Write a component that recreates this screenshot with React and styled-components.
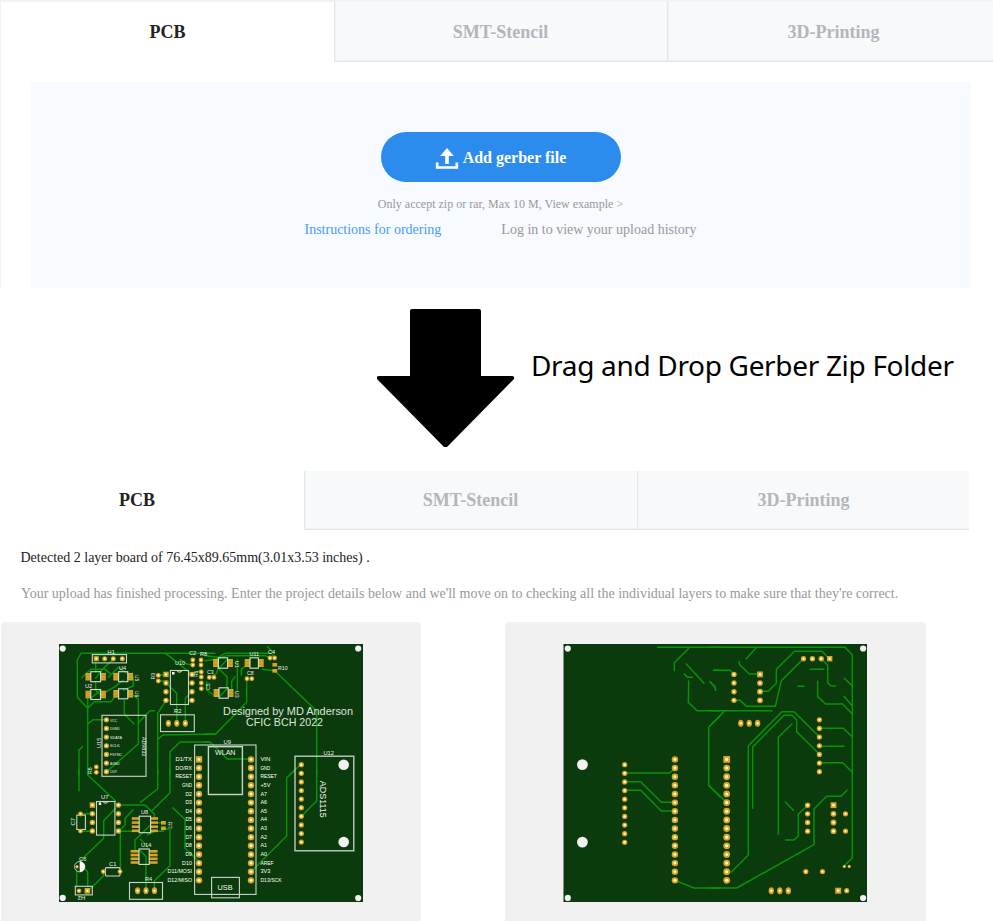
import React from "react";
import styled, { createGlobalStyle, css } from "styled-components";

const GlobalStyle = createGlobalStyle`
  * { box-sizing: border-box; }
  body {
    margin: 0;
    background: #fff;
    font-family: "Liberation Serif", "Times New Roman", serif;
    overflow: hidden;
  }
`;

const Page = styled.main`
  width: 993px;
  height: 921px;
  overflow: hidden;
  display: flex;
  flex-direction: column;
`;

const UploadSection = styled.section`
  height: 288px;
  flex: none;
  border-top: 2px solid #f1f2f6;
  border-left: 1px solid #f1f2f6;
  overflow: hidden;
`;

const TabBar = styled.nav`
  display: grid;
  grid-template-columns: ${(p) => p.$columns};
  height: ${(p) => p.$height}px;
`;

const Tab = styled.div`
  display: flex;
  align-items: center;
  justify-content: center;
  padding-right: ${(p) => p.$inset || 0}px;
  padding-top: ${(p) => p.$drop || 0}px;
  padding-bottom: ${(p) => p.$lift || 0}px;
  font-size: 18px;
  line-height: 20px;
  font-weight: 700;
  color: #222;
  ${(p) =>
    p.$muted &&
    css`
      color: #b3b6bb;
      background: #f8f9fb;
      border-left: 1px solid #e2e7ea;
      border-bottom: 1px solid #e2e5e8;
      box-shadow: inset 1px -1px 1px #f0f3f5;
    `}
`;

const DropZone = styled.div`
  width: 940px;
  height: 206px;
  margin: 20px 0 0 30px;
  padding-top: 50px;
  background: #f7faff;
  display: flex;
  flex-direction: column;
  align-items: center;
`;

const UploadButton = styled.button`
  width: 240px;
  height: 50px;
  border: 0;
  border-radius: 25px;
  background: #2c8cee;
  color: #fff;
  font: 700 16px/20px "Liberation Serif", serif;
  display: flex;
  align-items: center;
  justify-content: center;
  gap: 4px;
  padding: 2px 1px 0 0;

  svg {
    margin-top: 2px;
  }
`;

const Hint = styled.p`
  margin: 14px 1px 0 0;
  font-size: 12px;
  line-height: 16px;
  color: #999;
`;

const Links = styled.div`
  display: flex;
  gap: 60px;
  margin: 9px 1px 0 0;
  font-size: 14px;
  line-height: 18px;
`;

const TextLink = styled.a`
  color: ${(p) => (p.$accent ? "#4a9bff" : "#999")};
`;

const StepBanner = styled.section`
  height: 183px;
  flex: none;
  display: flex;
  align-items: flex-start;
  padding: 21px 0 0 377px;
  gap: 16px;
`;

const StepText = styled.h2`
  margin: 37px 0 0;
  font: 400 28px/38px "Noto Sans", "Open Sans", sans-serif;
  letter-spacing: -0.32px;
  color: #000;
  white-space: nowrap;
`;

const ResultSection = styled.section`
  width: 969px;
`;

const Message = styled.p`
  margin: ${(p) => (p.$first ? 19 : 18)}px 0 0 ${(p) => (p.$first ? 20.5 : 21)}px;
  font-size: 14px;
  line-height: 18px;
  color: ${(p) => (p.$first ? "#222" : "#999")};
`;

const Previews = styled.div`
  display: flex;
  gap: 84px;
  margin: 19px 0 0 1px;
`;

const PreviewCard = styled.figure`
  margin: 0;
  width: ${(p) => p.$width}px;
  height: 330px;
  border-radius: 4px;
  background: #f1f1f1;
  padding: 22px 0 0 58px;
`;

const BoardSvg = styled.svg`
  display: block;
  font-family: "Liberation Sans", Arial, sans-serif;
`;

const Traces = ({ x, y, lines }) => (
  <g
    transform={`translate(${x} ${y}) scale(0.33333)`}
    fill="none"
    stroke="#079309"
    strokeWidth="4.4"
    strokeLinejoin="round"
    strokeLinecap="round"
  >
    {lines.map((l) => (
      <polyline key={l} points={l} />
    ))}
  </g>
);

const Dot = ({ x, y, square, r = 3.2, tall = 0 }) => (
  <g>
    {square ? (
      <rect x={x - r} y={y - r} width={r * 2} height={r * 2} fill="#d9a520" />
    ) : (
      <ellipse cx={x} cy={y} rx={r} ry={r + tall} fill="#d9a520" />
    )}
    <circle cx={x} cy={y} r={r * 0.46} fill="#fff6da" />
  </g>
);

const DotColumn = ({ x, y, count, step, square, r }) =>
  Array.from({ length: count }, (_, i) => (
    <Dot key={i} x={x} y={y + i * step} r={r} square={square && i === 0} />
  ));

const Chip = ({ x, y, w, h, pw = 5.3, bars = 1 }) => (
  <g>
    {[x - pw, x + w].map((px) =>
      Array.from({ length: bars }, (_, i) => {
        const barHeight = bars === 1 ? h - 2.4 : 2.6;
        const barY = bars === 1 ? y + 1.2 : y + 1 + (i * (h - 4.2)) / (bars - 1);
        return <rect key={`${px}-${i}`} x={px} y={barY} width={pw} height={barHeight} fill="#d7a321" />;
      })
    )}
    {bars === 1 && (
      <path
        d={`M${x - pw} ${y + 3.6}h${pw}M${x - pw} ${y + 6.6}h${pw}M${x + w} ${y + 3.6}h${pw}M${x + w} ${y + 6.6}h${pw}`}
        stroke="#a98a1e"
        strokeWidth=".5"
      />
    )}
    <rect x={x} y={y} width={w} height={h} fill="none" stroke="#d5ded5" strokeWidth="1.1" />
  </g>
);

const Silk = ({ x, y, size = 6, w, end, turn, children, fill = "#eef3ee" }) => (
  <text
    x={x}
    y={y}
    fontSize={size}
    textLength={w}
    lengthAdjust="spacingAndGlyphs"
    textAnchor={end ? "end" : "start"}
    fill={fill}
    transform={turn ? `rotate(${turn} ${x} ${y})` : undefined}
  >
    {children}
  </text>
);

const LEFT_PINS = ["D1/TX", "DO/RX", "RESET", "GND", "D2", "D3", "D4", "D5", "D6", "D7", "D8", "D9", "D10", "D11/MOSI", "D12/MISO"];
const RIGHT_PINS = ["VIN", "GND", "RESET", "+5V", "A7", "A6", "A5", "A4", "A3", "A2", "A1", "A0", "AREF", "3V3", "D13/SCK"];
const SENSOR_PINS = ["VCC", "DGND", "SDATA", "SCLK", "FSYNC", "AGND", "OUT"];
const pinWidth = (s) => (s.length > 6 ? s.length * 3.05 : s.length * 3.3);

const TOP_LEFT = [
  "480,40 78,40 67,60 67,172 98,205 98,405",
  "98,170 98,205 118,185 168,185 178,172",
  "80,113 107,88 150,88 165,100",
  "122,68 122,95",
  "175,58 145,85 122,115",
  "160,112 190,82 235,112 235,138 205,150",
  "122,125 122,150 137,165 180,140 205,120",
  "107,175 137,150",
  "330,40 345,50 411,103",
  "208,180 208,222 237,252",
  "235,165 250,178 250,312 155,395",
  "250,248 285,212 298,212",
  "155,239 115,239 100,250",
  "333,181 308,220 308,405",
  "365,250 365,160 345,140 333,130",
  "391,250 391,175 411,155",
  "308,298 323,285 480,282",
  "345,405 345,335 375,306 465,306",
  "72,405 72,330 83,320",
  "310,123 340,123",
  "310,106 333,104",
  "375,58 395,72 413,75",
  "411,103 440,90",
];
const TOP_RIGHT = [
  "0,47 40,52 60,40 200,40 209,55",
  "0,62 30,58 65,47 180,47 195,54",
  "0,282 32,282 125,187 125,116",
  "0,306 15,306 67,357 137,357",
  "172,88 209,92 335,213 335,405",
  "288,373 253,405",
  "187,20 205,37",
  "97,60 97,150",
  "40,85 66,110 66,143",
  "80,148 80,124 90,110",
  "109,105 109,88 122,78",
  "42,85 68,57",
  "43,170 68,145",
  "15,112 35,100 40,80",
  "5,125 5,150 30,168",
];
const BOTTOM_LEFT = [
  "72,0 72,62",
  "98,0 98,15 182,93",
  "308,0 308,57 256,97",
  "345,0 345,68 290,123",
  "190,105 270,105 298,133 298,145",
  "182,115 146,152 146,205 75,273",
  "190,184 238,184",
  "196,184 196,300",
  "234,120 210,145 210,165 192,182",
  "78,131 110,131",
  "78,184 112,184",
  "287,165 240,210 240,240",
  "273,362 273,260 255,240",
  "278,194 300,184 325,184",
  "308,158 325,158",
  "325,175 345,178 345,287 298,332 298,362",
  "65,300 65,350",
  "83,290 98,305 98,350",
  "108,355 145,318 145,305",
  "353,113 390,148 390,235 430,272",
  "256,208 278,230",
];
const BOTTOM_RIGHT = ["335,0 335,93 290,138", "268,2 245,23 245,198 140,303"];

const BACK_LEFT = [
  "293,22 480,22",
  "387,24 343,68 343,92",
  "379,72 432,130",
  "373,102 382,112 397,112",
  "386,123 385,187 411,212 480,212",
  "450,126 465,141 467,151",
  "461,91 480,91",
  "480,228 446,262 446,436 480,470",
  "195,399 328,399 345,385",
  "195,425 242,425 304,487 345,487",
  "195,451 242,451 304,513 345,513",
  "345,721 402,744 480,744",
];
const BACK_RIGHT = [
  "0,22 405,22 427,44 427,653 403,677",
  "138,24 108,57",
  "87,65 89,74 118,102 148,102",
  "10,91 60,91 72,103",
  "0,125 15,140 17,151",
  "150,154 175,154 199,130 199,88 254,34 336,34 358,56",
  "72,181 90,181 110,199 196,199 214,122 280,56",
  "0,212 186,212",
  "43,214 0,257",
  "0,440 50,487",
  "334,56 353,76 353,128 362,137 377,138",
  "301,88 341,88",
  "263,139 282,139",
  "323,124 323,170 347,192 398,192 427,222",
  "403,115 427,138",
  "402,169 427,198",
  "328,265 400,265 427,291",
  "328,319 402,319",
  "328,368 398,368 427,397",
  "50,695 65,695 115,645 115,317 216,215 252,215 328,290",
  "128,505 128,321 222,226 246,226 260,240 260,275 328,342",
  "246,252 205,292 205,583",
  "226,486 250,511",
  "227,600 252,600 265,588 265,522 292,497",
  "0,744 80,744 312,614 312,507 350,469 393,469 411,451",
];

const Holes = ({ left, right }) => (
  <g fill="#f1f1f1">
    <circle cx={left} cy="648.6" r="3.1" />
    <circle cx={right} cy="648.5" r="3.1" />
    <circle cx={left} cy="897.9" r="3.1" />
    <circle cx={right} cy="898" r="3.1" />
  </g>
);

const FrontBoard = () => (
  <BoardSvg width="304" height="258" viewBox="59 644 304 258">
    <rect x="59" y="644" width="304" height="258" fill="#0b3a0c" />
    <Traces x={55} y={640} lines={TOP_LEFT} />
    <Traces x={205} y={640} lines={TOP_RIGHT} />
    <Traces x={55} y={770} lines={BOTTOM_LEFT} />
    <Traces x={205} y={770} lines={BOTTOM_RIGHT} />
    <Holes left={62.7} right={358.2} />
    <g fill="none" stroke="#cbd6cb" strokeWidth="1.1">
      <rect x="92.3" y="654.6" width="34.2" height="8.3" />
      <rect x="170.4" y="670.5" width="18.1" height="34" />
      <path d="M177 670.5q2.5 3.4 5 0" />
      <rect x="160.5" y="714.8" width="33.8" height="16.8" />
      <rect x="102" y="715.3" width="44" height="61" />
      <rect x="194.6" y="745" width="61.4" height="149.4" />
      <rect x="208.4" y="746.7" width="34" height="47.8" strokeWidth="1.4" />
      <rect x="211.6" y="877.4" width="27.8" height="20.4" />
      <rect x="295" y="756.2" width="58.8" height="94.6" strokeWidth="1.3" />
      <rect x="96.5" y="801.5" width="18.4" height="33.6" />
      <path d="M103 801.5q2.5 3.4 5 0" />
      <rect x="76.8" y="815.1" width="8.6" height="14.4" />
      <rect x="105.4" y="867.6" width="14.6" height="8.4" rx="1" />
      <rect x="75.3" y="886.3" width="17" height="8.6" />
      <rect x="129.5" y="882.5" width="33" height="16.8" />
    </g>
    <rect x="172" y="672" width="2.5" height="2.5" fill="#fff" />
    <rect x="98.8" y="802.5" width="2.4" height="2.4" fill="#fff" />
    <circle cx="343.7" cy="764.7" r="5.3" fill="#f1f1f1" />
    <circle cx="343.7" cy="842" r="5.3" fill="#f1f1f1" />

    <Chip x={90.8} y={671.7} w={9.8} h={10} />
    <Chip x={90.8} y={689.5} w={9.8} h={10} />
    <Chip x={118.6} y={671.7} w={9.2} h={10} />
    <Chip x={118.6} y={688.8} w={9.2} h={10} />
    <Chip x={218.4} y={657.8} w={9.2} h={10.4} />
    <Chip x={219} y={687.8} w={9.2} h={10.4} />
    <Chip x={250} y={657.8} w={8.4} h={10.4} />
    <Chip x={139.2} y={816.2} w={11.4} h={16.5} pw={7.4} bars={4} />
    <Chip x={139} y={849} w={10.2} h={15.4} pw={8.4} bars={4} />

    {[96.3, 104.7, 113.3, 122.3].map((x, i) => (
      <Dot key={x} x={x} y={658.7} r={2.5} square={i === 0} />
    ))}
    <DotColumn x={166} y={674.4} count={4} step={8.65} r={2.7} square />
    <DotColumn x={192} y={674.4} count={4} step={8.65} r={2.7} />
    <DotColumn x={92.4} y={805.1} count={4} step={8.65} r={2.7} square />
    <DotColumn x={118.4} y={805.1} count={4} step={8.65} r={2.7} />
    <DotColumn x={106.4} y={719.8} count={7} step={8.65} r={2.6} />
    <DotColumn x={199} y={759.4} count={15} step={8.64} r={3.2} square />
    <DotColumn x={251} y={759.4} count={15} step={8.64} r={3.2} />
    <DotColumn x={301.3} y={764.7} count={10} step={8.6} r={2.6} />
    {[168.4, 176.8, 185.3].map((x) => (
      <Dot key={x} x={x} y={723.3} r={2.6} tall={0.8} />
    ))}
    {[137.6, 146, 154.5].map((x) => (
      <Dot key={x} x={x} y={890.7} r={2.6} tall={0.8} />
    ))}
    {[
      [80.5, 814], [80.5, 831.1], [103.3, 871.6], [120, 871.6], [79, 890.8],
      [158.3, 675.4], [158.3, 681], [192.8, 660], [192.8, 665], [201, 660], [201, 665],
      [201.3, 672], [201.3, 677], [201.3, 683], [201.3, 688.7], [96.3, 767], [96.3, 772.3],
      [209.3, 677.4], [214, 677.4], [270, 658], [274.6, 658], [247, 678.7], [251.8, 678.7],
    ].map(([x, y]) => (
      <Dot key={`${x}-${y}`} x={x} y={y} r={2.4} />
    ))}
    <Dot x={87.4} y={890.8} r={2.8} square />
    {[[272.4, 663], [272.4, 669], [161, 821], [161, 826.5]].map(([x, y]) => (
      <rect key={`${x}-${y}`} x={x} y={y} width="4.8" height="3.6" fill="#d7a321" />
    ))}
    <circle cx="79.7" cy="866.7" r="5.2" fill="none" stroke="#d5ded5" strokeWidth=".8" />
    <path d="M79.7 861.5a5.2 5.2 0 0 1 0 10.4z" fill="#fff" />
    <Dot x={77} y={866.7} r={1.7} />

    <Silk x={223} y={714.6} size={10.2} w={130} fill="#dce6dc">Designed by MD Anderson</Silk>
    <Silk x={246} y={725.6} size={10.2} w={77} fill="#dce6dc">CFIC BCH 2022</Silk>
    <Silk x={215} y={755.4} size={7.5} w={20.5}>WLAN</Silk>
    <Silk x={217.5} y={889.8} size={7.5} w={15}>USB</Silk>
    <Silk x={319.8} y={780.8} size={9.6} w={37} turn={90}>ADS1115</Silk>
    {LEFT_PINS.map((s, i) => (
      <Silk key={s} x={192} y={761 + i * 8.64} size={5.6} w={pinWidth(s)} end fill="#fff">{s}</Silk>
    ))}
    {RIGHT_PINS.map((s, i) => (
      <Silk key={s} x={260.4} y={761 + i * 8.64} size={5.6} w={pinWidth(s)} fill="#fff">{s}</Silk>
    ))}
    {SENSOR_PINS.map((s, i) => (
      <Silk key={s} x={110} y={721.5 + i * 8.65} size={4.4} w={s.length * 2.4}>{s}</Silk>
    ))}
    <Silk x={107.6} y={653.6} size={5.6}>H1</Silk>
    <Silk x={85} y={687.6} size={5.6}>U2</Silk>
    <Silk x={119} y={670.2} size={5.6}>U4</Silk>
    <Silk x={134.6} y={675} size={4.8} turn={90}>U5</Silk>
    <Silk x={134.6} y={691} size={4.8} turn={90}>U6</Silk>
    <Silk x={155} y={679.5} size={5.2} turn={-90}>R3</Silk>
    <Silk x={174} y={713.4} size={5.8}>R2</Silk>
    <Silk x={101} y={748} size={5.6} turn={-90}>U15</Silk>
    <Silk x={142.4} y={737} size={5.2} w={19} turn={90}>AD9833</Silk>
    <Silk x={92} y={774} size={5.2} turn={-90}>R6</Silk>
    <Silk x={175} y={664.6} size={5.4}>U10</Silk>
    <Silk x={189} y={655.4} size={5.6}>C2</Silk>
    <Silk x={200} y={655.6} size={5.6}>R8</Silk>
    <Silk x={198.4} y={677} size={4.8} turn={-90}>R5</Silk>
    <Silk x={207} y={674} size={5.2}>C3</Silk>
    <Silk x={210.4} y={690} size={5.2} turn={-90}>C5</Silk>
    <Silk x={234.6} y={661} size={5.2} turn={90}>U1</Silk>
    <Silk x={234.6} y={691} size={5.2} turn={90}>U3</Silk>
    <Silk x={249.6} y={656} size={5.4}>U11</Silk>
    <Silk x={268} y={653.6} size={5.6}>C4</Silk>
    <Silk x={278} y={670} size={5.2}>R10</Silk>
    <Silk x={247} y={675} size={5.2}>C8</Silk>
    <Silk x={223.6} y={743.8} size={5.8}>U9</Silk>
    <Silk x={323.4} y={755.2} size={5.8}>U12</Silk>
    <Silk x={101} y={799} size={6}>U7</Silk>
    <Silk x={74.8} y={825.4} size={5.8} turn={-90}>C7</Silk>
    <Silk x={141} y={814} size={5.6}>U8</Silk>
    <Silk x={168} y={822} size={5.2} turn={90}>R7</Silk>
    <Silk x={141} y={846.6} size={5.6}>U14</Silk>
    <Silk x={79} y={860.8} size={5.8}>C6</Silk>
    <Silk x={109} y={865.8} size={5.8}>C1</Silk>
    <Silk x={145} y={880.6} size={5.6}>R4</Silk>
    <Silk x={85.2} y={896.2} size={5.8} turn={180}>H2</Silk>
  </BoardSvg>
);

const BackBoard = () => (
  <BoardSvg width="304" height="258" viewBox="563 644 304 258">
    <rect x="563.5" y="644" width="303.5" height="258" fill="#0b3a0c" />
    <Traces x={560} y={640} lines={BACK_LEFT} />
    <Traces x={710} y={640} lines={BACK_RIGHT} />
    <Holes left={567.8} right={863.1} />
    <circle cx="582.4" cy="764.6" r="5.4" fill="#f1f1f1" />
    <circle cx="582.4" cy="842.1" r="5.4" fill="#f1f1f1" />
    <DotColumn x={624.7} y={764.7} count={10} step={8.62} r={2.6} />
    <DotColumn x={674.9} y={759.4} count={15} step={8.64} r={3.2} />
    <DotColumn x={726.7} y={759.4} count={15} step={8.64} r={3.4} square />
    <DotColumn x={734} y={674.4} count={4} step={8.65} r={2.7} />
    <DotColumn x={760} y={674.4} count={4} step={8.65} r={2.9} square />
    <DotColumn x={819.4} y={719.8} count={7} step={8.65} r={2.6} />
    <DotColumn x={807.6} y={805.2} count={4} step={8.65} r={2.7} />
    <DotColumn x={833.5} y={805.2} count={4} step={8.65} r={2.9} square />
    {[803.5, 812.4, 821.2, 829.7].map((x, i) => (
      <Dot key={x} x={x} y={658.7} r={2.7} square={i === 3} />
    ))}
    {[740.8, 749.2, 757.6].map((x) => (
      <Dot key={x} x={x} y={723.2} r={2.7} tall={0.8} />
    ))}
    {[771.3, 779.8, 788.3].map((x) => (
      <Dot key={x} x={x} y={890.7} r={2.7} tall={0.8} />
    ))}
    {[[845.5, 813.8], [845.5, 831.1], [805.8, 871.6], [822.5, 871.6], [846.7, 890.7]].map(([x, y]) => (
      <Dot key={`${x}-${y}`} x={x} y={y} r={2.6} />
    ))}
    <Dot x={838.2} y={890.7} r={3} square />
    <Dot x={844.3} y={866.4} r={1.6} />
    <Dot x={849.2} y={866.4} r={1.6} />
  </BoardSvg>
);

const UploadIcon = () => (
  <svg width="24" height="22" viewBox="0 0 24 22" fill="#fff">
    <path d="M12 0l6.8 8h-5v8h-3.6V8h-5z" />
    <path d="M.8 14.5h2.7v3.7h17v-3.7h2.7v6.3H.8z" />
  </svg>
);

const DownArrow = () => (
  <svg width="138" height="139" viewBox="0 0 138 139">
    <path d="M35 0h67q2 0 2 2v65h31q3 0 2 3L70 138h-3L0 70q-1-3 2-3h31V2q0-2 2-2z" fill="#000" />
  </svg>
);

const Tabs = ({ columns, height, inset, lift, drop }) => (
  <TabBar $columns={columns} $height={height}>
    <Tab $inset={inset} $lift={lift}>PCB</Tab>
    <Tab $muted $inset={1} $drop={drop}>SMT-Stencil</Tab>
    <Tab $muted $inset={drop ? 1 : 0} $drop={drop}>3D-Printing</Tab>
  </TabBar>
);

export default function App() {
  return (
    <Page>
      <GlobalStyle />
      <UploadSection>
        <Tabs columns="333px 333px 333px" height={60} inset={0} lift={0} drop={1} />
        <DropZone>
          <UploadButton>
            <UploadIcon />
            Add gerber file
          </UploadButton>
          <Hint>Only accept zip or rar, Max 10 M, View example &gt;</Hint>
          <Links>
            <TextLink $accent>Instructions for ordering</TextLink>
            <TextLink>Log in to view your upload history</TextLink>
          </Links>
        </DropZone>
      </UploadSection>
      <StepBanner>
        <DownArrow />
        <StepText>Drag and Drop Gerber Zip Folder</StepText>
      </StepBanner>
      <ResultSection>
        <Tabs columns="304px 333px 332px" height={59} inset={30} lift={1} drop={0} />
        <Message $first>Detected 2 layer board of 76.45x89.65mm(3.01x3.53 inches) .</Message>
        <Message>
          Your upload has finished processing. Enter the project details below and we'll move on to checking all the
          individual layers to make sure that they're correct.
        </Message>
        <Previews>
          <PreviewCard $width={420}>
            <FrontBoard />
          </PreviewCard>
          <PreviewCard $width={421}>
            <BackBoard />
          </PreviewCard>
        </Previews>
      </ResultSection>
    </Page>
  );
}
